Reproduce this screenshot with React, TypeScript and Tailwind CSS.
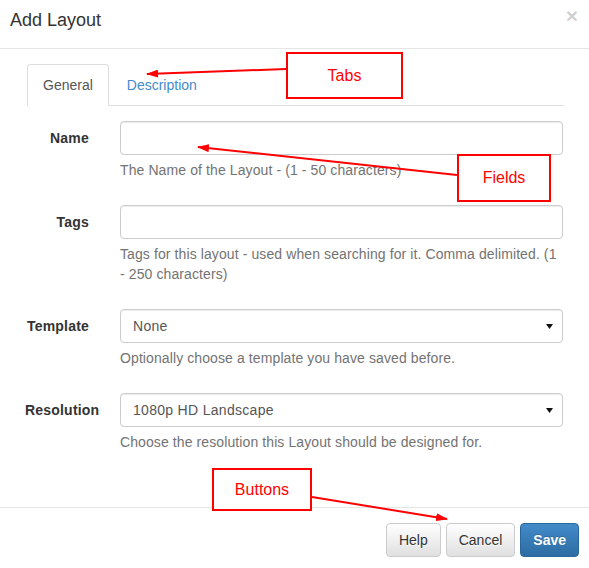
import React from "react";

const font = { fontFamily: '"Liberation Sans", Arial, Helvetica, sans-serif' };

function Field({
  label,
  help,
  select,
}: {
  label: string;
  help: string;
  select?: string;
}) {
  return (
    <div className="flex mb-[15px]">
      <div className="w-[64px] ml-[-1px] text-right whitespace-nowrap font-bold text-[14px] leading-[20px] pt-[7px] text-[#333] tracking-[0.2px]">
        {label}
      </div>
      <div className="ml-[31px] w-[443px]">
        {select !== undefined ? (
          <div className="h-[34px] border border-[#ccc] rounded-[4px] shadow-[inset_0_1px_1px_rgba(0,0,0,0.075)] flex items-center pl-[12px] pr-[7px] text-[14px] text-[#555] bg-white tracking-[0.3px]">
            <span className="flex-1">{select}</span>
            <svg width="7" height="5" viewBox="0 0 7 5" className="mr-[2px]">
              <polygon points="0,0 7,0 3.5,5" fill="#111" />
            </svg>
          </div>
        ) : (
          <div className="h-[34px] border border-[#ccc] rounded-[4px] shadow-[inset_0_1px_1px_rgba(0,0,0,0.075)] bg-white" />
        )}
        <div className="mt-[5px] mb-[10px] text-[14px] leading-[20px] text-[#737373] tracking-[0.1px]">
          {help}
        </div>
      </div>
    </div>
  );
}

export default function App() {
  return (
    <div className="relative w-[589px] h-[568px] bg-white overflow-hidden text-[#333]" style={font}>
      {/* Header */}
      <div className="h-[49px] border-b border-[#e5e5e5] flex items-start justify-between pl-[10px] pr-[11px]">
        <div className="pt-[7px] text-[18px] leading-[26px] text-[#333]">Add Layout</div>
        <div className="pt-[5px] text-[21px] leading-[21px] font-bold text-black/20">×</div>
      </div>

      {/* Body */}
      <div className="pt-[15px] pb-[30px] pl-[27px] pr-[25px]">
        <div className="flex border-b border-[#ddd] h-[42px]">
          <div className="h-[42px] px-[15px] pt-[10px] border border-[#ddd] border-b-white bg-white rounded-t-[4px] text-[14px] leading-[20px] text-[#555]">
            General
          </div>
          <div className="ml-[2px] h-[41px] px-[16px] pt-[11px] text-[14px] leading-[20px] text-[#428bca]">
            Description
          </div>
        </div>
        <div className="pt-[15px] ml-[-1px]">
          <Field label="Name" help="The Name of the Layout - (1 - 50 characters)" />
          <Field
            label="Tags"
            help="Tags for this layout - used when searching for it. Comma delimited. (1 - 250 characters)"
          />
          <Field
            label="Template"
            select="None"
            help="Optionally choose a template you have saved before."
          />
          <Field
            label="Resolution"
            select="1080p HD Landscape"
            help="Choose the resolution this Layout should be designed for."
          />
        </div>
      </div>

      {/* Footer */}
      <div className="border-t border-[#e5e5e5] pt-[15px] pr-[10px] flex justify-end gap-[5px]">
        <button className="h-[34px] px-[12px] border border-[#ccc] rounded-[4px] bg-gradient-to-b from-white to-[#e0e0e0] text-[14px] text-[#333] [text-shadow:0_1px_0_#fff]">
          Help
        </button>
        <button className="h-[34px] px-[12px] border border-[#ccc] rounded-[4px] bg-gradient-to-b from-white to-[#e0e0e0] text-[14px] text-[#333] [text-shadow:0_1px_0_#fff]">
          Cancel
        </button>
        <button className="h-[34px] px-[12px] border border-[#2b669a] rounded-[4px] bg-gradient-to-b from-[#428bca] to-[#2d6ca2] text-[14px] font-bold text-white [text-shadow:0_-1px_0_rgba(0,0,0,0.2)]">
          Save
        </button>
      </div>

      {/* Annotations */}
      <svg className="absolute inset-0 pointer-events-none" width="589" height="568">
        <defs>
          <marker id="ah" markerWidth="12" markerHeight="8" refX="11" refY="4" orient="auto" markerUnits="userSpaceOnUse">
            <polygon points="0,0 12,4 0,8" fill="#ff0000" />
          </marker>
        </defs>
        <line x1="286" y1="69" x2="147" y2="74" stroke="#ff0000" strokeWidth="2" markerEnd="url(#ah)" />
        <line x1="457" y1="175" x2="198" y2="147" stroke="#ff0000" strokeWidth="2" markerEnd="url(#ah)" />
        <line x1="312" y1="497" x2="447" y2="519" stroke="#ff0000" strokeWidth="2" markerEnd="url(#ah)" />
      </svg>
      <div className="absolute left-[286px] top-[52px] w-[117px] h-[47px] border-2 border-[#ff0000] bg-white flex items-center justify-center text-[16px] text-[#ff0000]">
        Tabs
      </div>
      <div className="absolute left-[457px] top-[154px] w-[94px] h-[48px] border-2 border-[#ff0000] bg-white flex items-center justify-center text-[16px] text-[#ff0000]">
        Fields
      </div>
      <div className="absolute left-[212px] top-[468px] w-[100px] h-[43px] border-2 border-[#ff0000] bg-white flex items-center justify-center text-[16px] text-[#ff0000]">
        Buttons
      </div>
    </div>
  );
}
